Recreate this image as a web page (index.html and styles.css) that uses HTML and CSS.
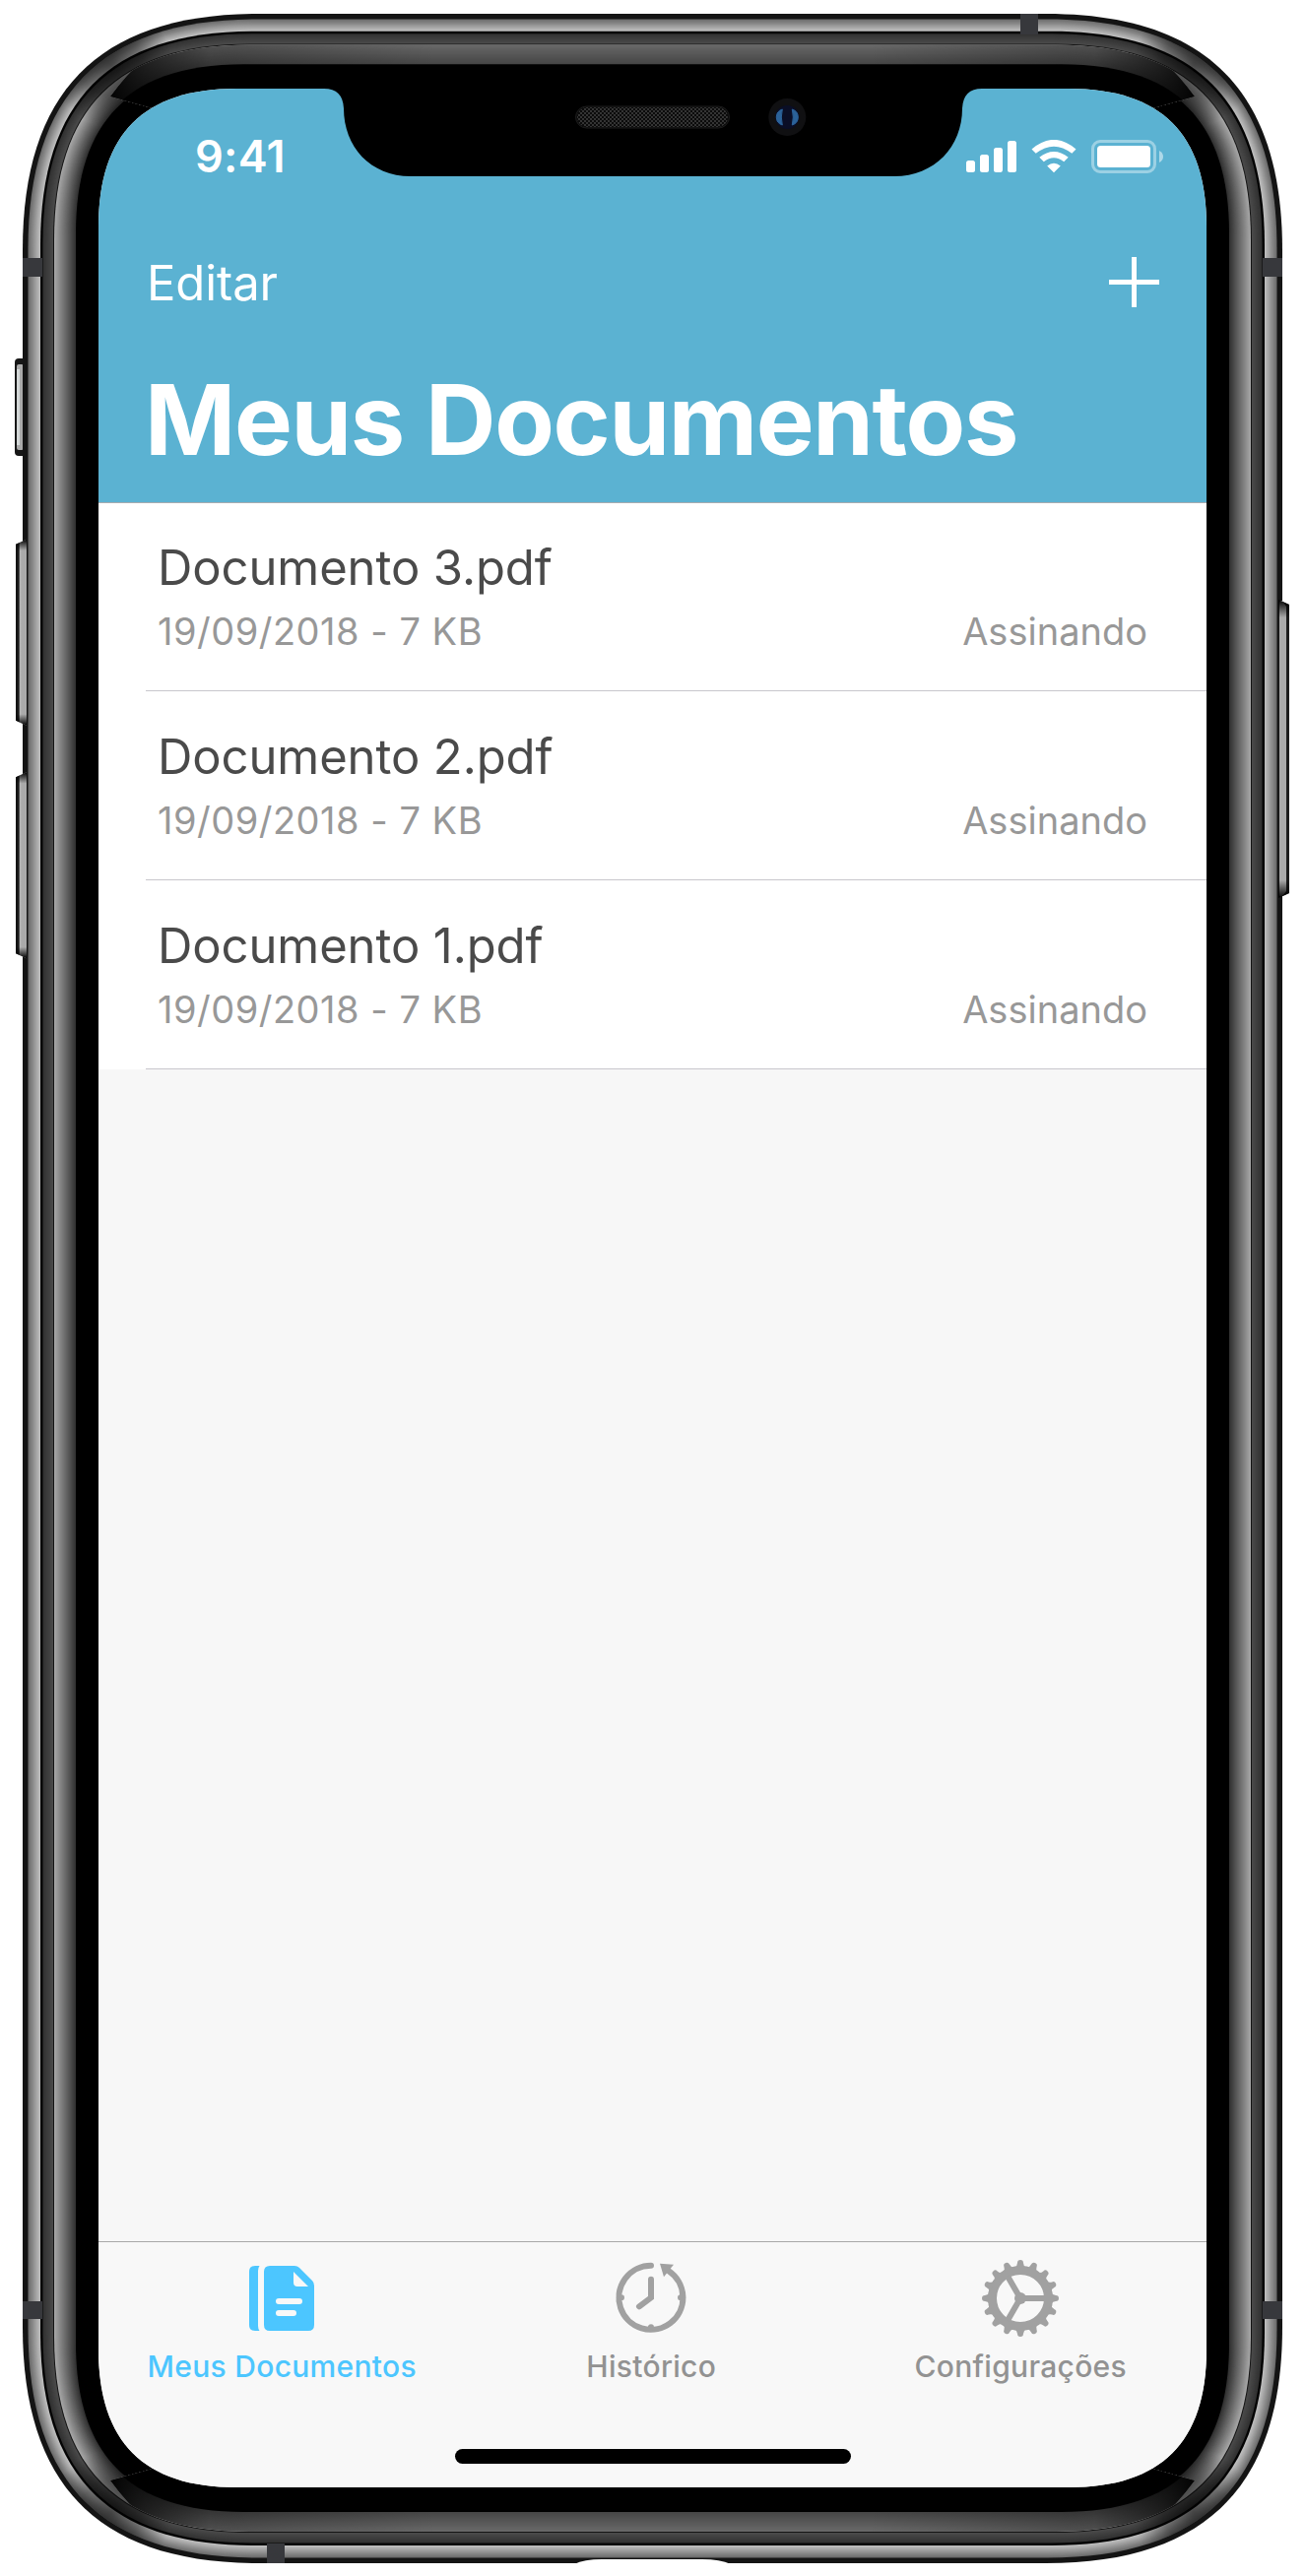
FILE: index.html
```html
<!DOCTYPE html>
<html lang="pt-BR">
<head>
<meta charset="utf-8">
<title>Meus Documentos</title>
<link rel="stylesheet" href="styles.css">
</head>
<body>
<div class="phone">
  <svg class="frame" viewBox="0 0 1325 2616" aria-hidden="true">
    <defs>
      <linearGradient id="key" x1="0" x2="1"><stop offset="0" stop-color="#111"/><stop offset=".28" stop-color="#1c1c1c"/><stop offset=".4" stop-color="#b8b8b8"/><stop offset=".55" stop-color="#aaa"/><stop offset="1" stop-color="#aaa"/></linearGradient>
      <linearGradient id="keyEnds" x1="0" x2="0" y1="0" y2="1"><stop offset="0" stop-color="#000"/><stop offset=".06" stop-color="#000" stop-opacity="0"/><stop offset=".94" stop-color="#000" stop-opacity="0"/><stop offset="1" stop-color="#000"/></linearGradient>
      <linearGradient id="corner" gradientUnits="userSpaceOnUse" x1="115" x2="1210" y1="0" y2="0"><stop offset="0" stop-color="#000" stop-opacity=".95"/><stop offset=".03" stop-color="#000" stop-opacity=".7"/><stop offset=".09" stop-color="#000" stop-opacity=".25"/><stop offset=".3" stop-color="#000" stop-opacity="0"/><stop offset=".7" stop-color="#000" stop-opacity="0"/><stop offset=".91" stop-color="#000" stop-opacity=".25"/><stop offset=".97" stop-color="#000" stop-opacity=".7"/><stop offset="1" stop-color="#000" stop-opacity=".95"/></linearGradient>
      <radialGradient id="dim"><stop offset="0" stop-color="#000" stop-opacity=".6"/><stop offset=".5" stop-color="#000" stop-opacity=".4"/><stop offset="1" stop-color="#000" stop-opacity="0"/></radialGradient>
      <clipPath id="ends"><path d="M145 61Q128 76 112 98L300 150H1025L1213 98Q1197 76 1180 61L1100 0H225ZM145 2556Q128 2541 112 2519L300 2467H1025L1213 2519Q1197 2541 1180 2556L1100 2616H225Z"/></clipPath>
      <clipPath id="body"><path id="body-outline"/></clipPath>
      <pattern id="mesh" width="4" height="4" patternUnits="userSpaceOnUse"><path d="M0 0h2v2h-2zM2 2h2v2h-2z" fill="#343434"/></pattern>
    </defs>
    <g>
      <rect x="15" y="364" width="14" height="99" rx="4" fill="#171717"/><rect x="17" y="370" width="7" height="87" rx="2" fill="#aaa"/><rect x="17" y="375" width="3" height="77" fill="#d4d8d8"/>
    </g>
    <g id="rings"></g>
    <g clip-path="url(#body)" fill="url(#dim)">
      <circle cx="113" cy="66" r="62"/><circle cx="1212" cy="66" r="62"/><circle cx="113" cy="2551" r="62"/><circle cx="1212" cy="2551" r="62"/>
    </g>
    <g clip-path="url(#ends)"><g id="end-rings"></g></g>
    <g>
      <path d="M16 507L27 503V655L16 651Z" transform="translate(0 -77.500) scale(1 1.243)" fill="url(#key)"/><path d="M16 507L27 503V655L16 651Z" transform="translate(0 -77.500) scale(1 1.243)" fill="url(#keyEnds)"/>
      <path d="M16 507L27 503V655L16 651Z" transform="translate(0 159) scale(1 1.243)" fill="url(#key)"/><path d="M16 507L27 503V655L16 651Z" transform="translate(0 159) scale(1 1.243)" fill="url(#keyEnds)"/>
      <path d="M1309 614L1298 609V912L1309 907Z" fill="#1c1c1c"/><path d="M1299 610H1302L1306 616V905L1302 910H1299Z" fill="#aaa"/><path d="M1309 614L1298 609V912L1309 907Z" fill="url(#keyEnds)"/>
    </g>
    <g fill="#37383c">
      <path d="M23 262h20v19h-20zM1282 262h20v19h-20zM23 2337h20v18h-20zM1282 2337h20v18h-20zM1036 14h18v21h-18zM271 2583h18v20h-18z"/>
    </g>
    <path d="M583 2604Q593 2599 611 2599H713Q731 2599 742 2604Z" fill="#fff"/>
  </svg>

  <main class="screen">
    <header class="header">
      <div class="status">
        <span class="clock">9:41</span>
        <svg class="indicators" width="202" height="36" viewBox="0 0 202 36" fill="#fff">
          <rect x="1" y="21" width="9" height="12" rx="2.5"/><rect x="15" y="15" width="9" height="18" rx="2.5"/><rect x="29" y="8" width="9" height="25" rx="2.5"/><rect x="43" y="1" width="9" height="32" rx="2.5"/>
          <path d="M67.500 9.500Q90 -9.800 112.500 9.500L108.300 13.800Q90 -.5 71.700 13.800ZM75.300 17.800Q90 6 104.700 17.800L100.200 22.300Q90 14 79.800 22.300ZM83.200 26.500Q90 21 96.800 26.500L90 33.300Z"/>
          <rect x="129.500" y="1.500" width="63" height="31" rx="7.500" fill="none" stroke="#fff" stroke-opacity=".4" stroke-width="3"/><rect x="134" y="6" width="54" height="22" rx="3.500"/><path d="M197 11Q201 13 201 17T197 23Z" opacity=".5"/>
        </svg>
      </div>
      <nav class="actions">
        <span class="edit">Editar</span>
        <svg width="51" height="51" viewBox="0 0 51 51"><path d="M0 25.500H51M25.500 0V51" stroke="#fff" stroke-width="5"/></svg>
      </nav>
      <h1 class="title">Meus Documentos</h1>
    </header>

    <ul class="documents">
      <li class="document"><div class="name">Documento 3.pdf</div><div class="info"><span class="date">19/09/2018 - 7 KB</span><span class="state">Assinando</span></div></li>
      <li class="document"><div class="name">Documento 2.pdf</div><div class="info"><span class="date">19/09/2018 - 7 KB</span><span class="state">Assinando</span></div></li>
      <li class="document"><div class="name">Documento 1.pdf</div><div class="info"><span class="date">19/09/2018 - 7 KB</span><span class="state">Assinando</span></div></li>
    </ul>

    <footer class="footer">
      <nav class="tabs">
        <div class="tab active">
          <svg width="80" height="80" viewBox="0 0 80 80"><path fill="#4cc6ff" d="M13 7H17.500Q16 9 16 12V68Q16 71 17.500 73H13Q7 73 7 67V13Q7 7 13 7Z"/><path fill="#4cc6ff" fill-rule="evenodd" d="M28 7H53Q56 7 58 9L71 22Q73 24 73 27V67Q73 73 67 73H28Q22 73 22 67V13Q22 7 28 7ZM52 13V24Q52 28 56 28H67ZM37 40a3 3 0 0 0 0 6H58a3 3 0 0 0 0-6ZM37 52a3 3 0 0 0 0 6H52a3 3 0 0 0 0-6Z"/></svg>
          <span>Meus Documentos</span>
        </div>
        <div class="tab">
          <svg width="80" height="80" viewBox="0 -1.3 80 80" fill="none" stroke="#a1a1a1" stroke-width="6" stroke-linecap="round"><path d="M40 5.500A32.500 32.500 0 1 0 58 11M40 19.500V38L28 47M7.500 38H10M70 38H72.500M40 68V70.500"/><path d="M49 3.500L63 4.500L53 17Z" fill="#a1a1a1" stroke="none"/></svg>
          <span>Histórico</span>
        </div>
        <div class="tab">
          <svg width="80" height="80" viewBox="-40 -40 80 80"><circle r="28.500" fill="none" stroke="#a1a1a1" stroke-width="9"/><g id="teeth"></g><circle r="6" fill="#a1a1a1"/><path d="M0 0H26M0 0L-13 -22.500M0 0L-13 22.500" stroke="#a1a1a1" stroke-width="6"/></svg>
          <span>Configurações</span>
        </div>
      </nav>
      <div class="home-bar"></div>
    </footer>
  </main>

  <svg class="notch" width="672" height="92" viewBox="0 0 672 92" aria-hidden="true">
    <path d="M0 0H672V2H670Q651 2 650 22C650 61 622 91 581 91H90C49 91 22 61 22 22Q21 2 2 2H0Z"/>
    <rect x="257.500" y="20" width="156" height="22" rx="11" fill="#0b0b0b" stroke="#1c1c1c"/><rect x="259" y="21" width="153" height="20" rx="10" fill="url(#mesh)"/>
    <g transform="translate(1.300 0)"><circle cx="471" cy="31" r="19" fill="#101012"/><circle cx="471" cy="31" r="12" fill="#0a0e26"/><path d="M466 23Q460 25 460 31T466 39Q464 31 466 23ZM476 23Q482 25 482 31T476 39Q478 31 476 23Z" fill="#2b6299" stroke="#2b6299"/></g>
  </svg>
</div>
<script src="frame.js"></script>
</body>
</html>
```
FILE: styles.css
```css
* { box-sizing: border-box; }
body { margin: 0; background: #fff; font-family: Inter, "Liberation Sans", sans-serif; }
.phone { position: relative; width: 1325px; height: 2616px; padding: 90px 100px; overflow: hidden; }
.frame { position: absolute; left: 0; top: 0; width: 1325px; height: 2616px; }
.screen {
  position: relative; display: flex; flex-direction: column; width: 1125px; height: 2436px; background: #f7f7f7; overflow: hidden;
  clip-path: path("M0 140C0 46 46 0 140 0H985C1079 0 1125 46 1125 140V2296C1125 2390 1079 2436 985 2436H140C46 2436 0 2390 0 2296Z");
}
.notch { position: absolute; left: 327px; top: 88px; }
.header { height: 421px; flex: none; background: #5bb2d2; color: #fff; border-bottom: 1px solid #a7acb0; }
.status { display: flex; justify-content: space-between; height: 132px; padding: 52px 43px 0 98px; }
.clock { font-size: 45px; line-height: 34px; font-weight: 600; letter-spacing: .3px; }
.indicators { flex: none; }
.actions { display: flex; justify-content: space-between; align-items: center; height: 132px; padding: 0 48px 3px 49px; }
.edit { font-size: 49px; line-height: 60px; padding-top: 3px; letter-spacing: -.1px; }
.title { margin: 0; padding: 12px 0 0 47px; font-size: 99px; line-height: 120px; font-weight: 700; letter-spacing: -1.35px; white-space: nowrap; }
.documents { list-style: none; margin: 0; padding: 0; height: 575px; flex: none; background: #fff; }
.document { position: relative; height: 192px; padding: 35px 60px 0 60px; }
.document::after { content: ""; position: absolute; left: 48px; right: 0; bottom: 1px; height: 1px; background: #c8c7cc; }
.name { color: #4a4a4a; font-size: 49px; line-height: 62px; letter-spacing: -.1px; }
.info { display: flex; justify-content: space-between; color: #989898; font-size: 38px; line-height: 48px; padding-top: 9px; }
.date { letter-spacing: .5px; }
.footer { margin-top: auto; height: 250px; border-top: 1px solid #a9a9a9; background: #f8f8f8; display: flex; flex-direction: column; align-items: center; }
.tabs { display: grid; grid-template-columns: repeat(3, 1fr); width: 100%; height: 210px; }
.tab { display: flex; flex-direction: column; align-items: center; padding: 17px 2.5px 0 0; color: #929292; font-size: 30px; line-height: 36px; font-weight: 500; letter-spacing: .3px; white-space: nowrap; }
.tab span { margin-top: 11px; }
.tab.active { color: #4cc6ff; }
.home-bar { width: 402px; height: 15px; border-radius: 8px; background: #000; }
```
FILE: frame.js
```js
const NS = "http://www.w3.org/2000/svg";

// Closed outline of the phone body, inset by d, with continuous corners.
function outline(d) {
  const l = 23 + d, t = 14 + d * 0.985, r = 1302 - d, b = 2603 - d;
  const s = 240 - 1.3 * d, q = s * 0.325;
  return `M${l} ${t + s}C${l} ${t + q} ${l + q} ${t} ${l + s} ${t}H${r - s}C${r - q} ${t} ${r} ${t + q} ${r} ${t + s}` +
    `V${b - s}C${r} ${b - q} ${r - q} ${b} ${r - s} ${b}H${l + s}C${l + q} ${b} ${l} ${b - q} ${l} ${b - s}Z`;
}

// Draws nested outlines; bands are [from, to, grey at from, grey at to].
function drawBands(group, bands) {
  for (const [from, to, a, b] of bands) {
    const steps = a === b ? 1 : Math.round(to - from);
    for (let i = 0; i < steps; i++) {
      const path = document.createElementNS(NS, "path");
      const g = Math.round(a + (b - a) * (steps > 1 ? i / (steps - 1) : 0));
      path.setAttribute("d", outline(from + (to - from) * i / steps));
      path.setAttribute("fill", `rgb(${g},${g},${g})`);
      group.appendChild(path);
    }
  }
}

document.getElementById("body-outline").setAttribute("d", outline(5.5));

drawBands(document.getElementById("rings"), [
  [0, 5.5, 20, 20], [5.5, 18, 108, 190], [18, 20.5, 4, 4],
  [20.5, 31, 50, 74], [31, 32, 20, 20], [32, 54, 165, 50], [54, 78, 0, 0]
]);

const ends = document.getElementById("end-rings");
drawBands(ends, [[32, 52, 104, 70]]);
const shade = document.createElementNS(NS, "path");
shade.setAttribute("d", outline(32));
shade.setAttribute("fill", "url(#corner)");
ends.appendChild(shade);
drawBands(ends, [[52, 78, 0, 0]]);

const teeth = document.getElementById("teeth");
for (let i = 0; i < 16; i++) {
  const tooth = document.createElementNS(NS, "path");
  tooth.setAttribute("d", "M-6 -31Q-3 -33 -3 -36A3 3 0 0 1 3 -36Q3 -33 6 -31Z");
  tooth.setAttribute("fill", "#a1a1a1");
  tooth.setAttribute("transform", `rotate(${i * 22.5})`);
  teeth.appendChild(tooth);
}
```
